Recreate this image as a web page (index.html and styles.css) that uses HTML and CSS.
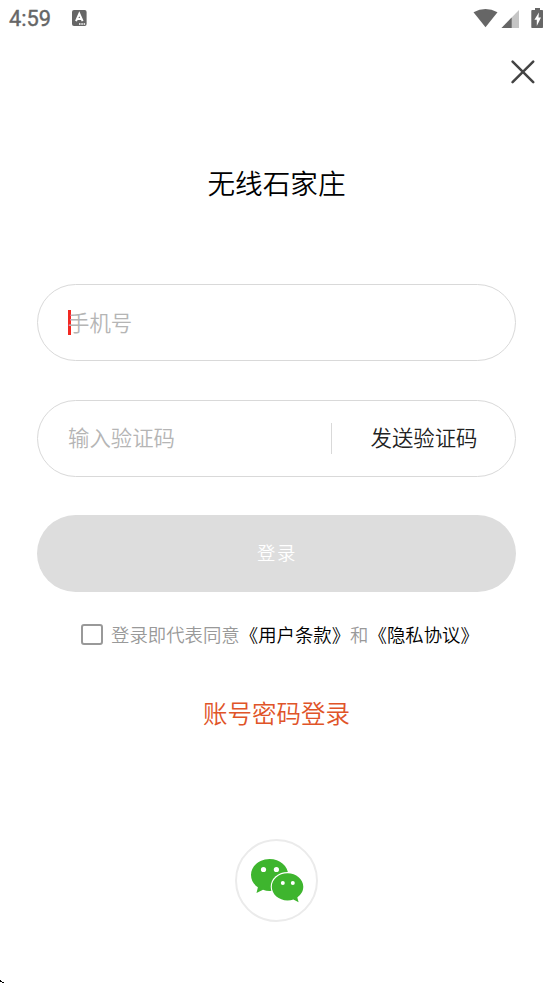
FILE: index.html
```html
<!DOCTYPE html>
<html lang="zh-CN">
<head>
<meta charset="utf-8">
<title>无线石家庄</title>
<link rel="stylesheet" href="styles.css">
</head>
<body>
<div class="screen">
  <header class="status">
    <span class="clock">4:59</span>
    <svg class="keyboard" width="15" height="16" viewBox="0 0 15 16"><rect width="14.6" height="16" rx="2" fill="#666"/><path d="M4 11.2 7.3 3.8 10.6 11.2M5.2 9H9.4" fill="none" stroke="#fff" stroke-width="2"/><path d="M7 14h1.5M9.3 14h1.5M11.6 14h1.5" stroke="#fff" stroke-width="1.4"/></svg>
    <svg class="indicators" width="72" height="20" viewBox="473 8 72 20"><path d="M473.5 12.3Q485.5 5.7 497.5 12.3L485.5 27.2Z" fill="#666"/><path d="M519 10V28H501.5Z" fill="#c5c5c5"/><path d="M511.7 17.5V28H501.5Z" fill="#666"/><path d="M532.3 10H535V8h5v2h2.3q.7 0 .7.7V27.3q0 .7-.7.7H532q-.7 0-.7-.7V10.700q0-.7 1-.7Z" fill="#666"/><path d="M538.9 12.5 534.4 19.8H536.8V25.9L541 17.6H538.5Z" fill="#fff"/></svg>
  </header>
  <div class="toolbar">
    <svg width="24" height="24" viewBox="0 0 24 24"><path d="M1.6 1.6 22.2 22.2M22.2 1.6 1.6 22.2" stroke="#434343" stroke-width="2.5" stroke-linecap="round"/></svg>
  </div>
  <h1 class="title">无线石家庄</h1>
  <main class="form">
    <div class="field"><span class="caret"></span><span class="hint">手机号</span></div>
    <div class="field"><span class="hint">输入验证码</span><span class="send">发送验证码</span></div>
    <button class="submit">登录</button>
  </main>
  <div class="terms"><span class="checkbox"></span><p>登录即代表同意<a>《用户条款》</a>和<a>《隐私协议》</a></p></div>
  <a class="password-login">账号密码登录</a>
  <div class="wechat">
    <svg width="54" height="46" viewBox="250 858 54 46"><path fill="#3eb52e" d="M269.6 859C259.4 859 251 866.2 251 875c0 5 2.6 9.4 6.9 12.3L256.5 893l6.5-3.3c2.1.8 4.3 1.3 6.6 1.3 10.3 0 18.6-7.2 18.6-16S279.9 859 269.6 859Z"/><ellipse cx="287.5" cy="886.8" rx="16.8" ry="14.9" fill="#fff"/><path fill="#3eb52e" d="M287.5 873.2c-8.7 0-15.7 6.1-15.7 13.600s7 13.700 15.700 13.700c2.100 0 4.100-.4 5.900-1l5.200 2.700-1.300-4.800c3.600-2.500 6-6.200 6-10.600 0-7.500-7.100-13.600-15.800-13.600Z"/><g fill="#fff"><circle cx="263.5" cy="869.5" r="2.6"/><circle cx="276.4" cy="869.5" r="2.6"/><circle cx="282.8" cy="883" r="2"/><circle cx="292.8" cy="883" r="2"/></g></svg>
  </div>
  <svg class="pointer" width="5" height="5" viewBox="0 0 5 5"><path d="M0 1h1v1h1v1H0ZM2 3h2v1H2Z"/></svg>
</div>
</body>
</html>
```
FILE: styles.css
```css
* { box-sizing: border-box; }
body { margin: 0; background: #fff; font-family: "Noto Sans CJK SC", sans-serif; font-weight: 350; }
.screen { position: relative; height: 984px; display: flex; flex-direction: column; overflow: hidden; }
.status { height: 38px; padding: 0 8px 2px 9px; display: flex; align-items: center; flex: none; }
.clock { width: 63px; font: 400 21.8px/38px Roboto, sans-serif; color: #666; padding-top: 2px; -webkit-text-stroke: .4px #666; }
.indicators { margin-left: auto; }
.toolbar { height: 68px; padding: 22px 18px 0 0; display: flex; justify-content: flex-end; align-items: flex-start; flex: none; }
.title { margin: 55px 0 0; height: 42px; line-height: 42px; text-align: center; font-size: 27.6px; font-weight: 350; color: #000; }
.form { display: flex; flex-direction: column; gap: 38.5px; margin: 81px 37px 0; }
.field { height: 77px; border: 1px solid #d9d9d9; border-radius: 39px; display: flex; align-items: center; padding-left: 30px; font-size: 21.4px; line-height: 32px; color: #222; }
.hint { color: #b5b5b5; padding-bottom: 2px; }
.caret { width: 3px; height: 25px; margin-right: -3px; background: #f22922; }
.send { margin-left: auto; width: 184px; height: 31px; line-height: 27px; border-left: 1px solid #d9d9d9; padding-left: 38.5px; }
.submit { height: 77px; border: 0; border-radius: 39px; background: #ddd; color: #fff; font: 350 18.4px "Noto Sans CJK SC", sans-serif; letter-spacing: 1.5px; padding: 0 0 4px 1px; }
.terms { display: flex; align-items: center; gap: 8px; margin: 28px 0 0 81px; height: 30px; font-size: 18.4px; color: #999; white-space: nowrap; }
.terms p { margin: 0; line-height: 28px; padding-bottom: 2px; font-feature-settings: "chws" 0, "halt" 0; text-spacing-trim: space-all; }
.terms a { color: #000; }
.checkbox { width: 22px; height: 21px; border: 2px solid #999; border-radius: 3px; margin-bottom: 1px; }
.password-login { margin-top: 43px; height: 41px; line-height: 40px; text-align: center; font-size: 24.5px; color: #e05428; }
.wechat { align-self: center; width: 83px; height: 83px; margin-top: 105px; border: 2px solid #ebebeb; border-radius: 50%; display: flex; align-items: center; justify-content: center; }
.pointer { position: absolute; left: 0; bottom: 0; }
```
